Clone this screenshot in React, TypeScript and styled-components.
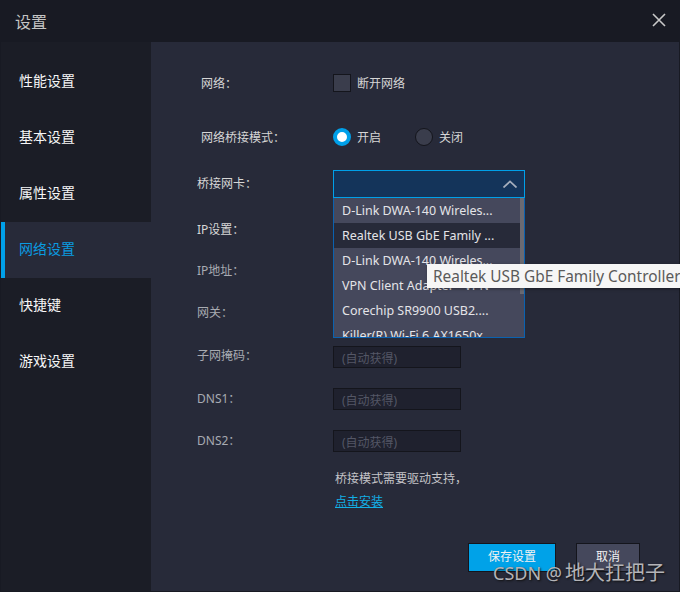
import { createGlobalStyle, styled } from "styled-components"

const GlobalStyle = createGlobalStyle`
    html, body {
        margin: 0;
        padding: 0;
        background: #181a23;
    }
    body {
        font-family: "Noto Sans", "Noto Sans CJK SC", sans-serif;
    }
`

const navItems = ["性能设置", "基本设置", "属性设置", "网络设置", "快捷键", "游戏设置"]
const adapters = [
    "D-Link DWA-140 Wireles...",
    "Realtek USB GbE Family ...",
    "D-Link DWA-140 Wireles...",
    "VPN Client Adapter - VPN",
    "Corechip SR9900 USB2....",
    "Killer(R) Wi-Fi 6 AX1650x",
]

export default function App() {
    return (
        <Window>
            <GlobalStyle />
            <TitleBar>
                <Title>设置</Title>
                <CloseIcon viewBox="0 0 14 14">
                    <path d="M1 1 L13 13 M13 1 L1 13" />
                </CloseIcon>
            </TitleBar>
            <Body>
                <Sidebar>
                    {navItems.map((item) => (
                        <NavItem key={item} $active={item === "网络设置"}>{item}</NavItem>
                    ))}
                </Sidebar>
                <Panel>
                    <Form>
                        <Row $top={30}>
                            <Label $indent={4}>网络：</Label>
                            <Checkbox />
                            <OptionText>断开网络</OptionText>
                        </Row>
                        <Row $top={32}>
                            <Label $indent={4}>网络桥接模式：</Label>
                            <RadioGroup>
                                <Radio $on />
                                <OptionText>开启</OptionText>
                            </RadioGroup>
                            <RadioGroup>
                                <Radio />
                                <OptionText>关闭</OptionText>
                            </RadioGroup>
                        </Row>
                        <Row $top={22} $height={28}>
                            <Label $lift={2}>桥接网卡：</Label>
                            <Select>
                                <SelectHead>
                                    <Chevron viewBox="0 0 14 8">
                                        <path d="M0.5 7.5 L7 1.5 L13.5 7.5" />
                                    </Chevron>
                                </SelectHead>
                                <SelectList>
                                    <Options>
                                        {adapters.map((name, i) => (
                                            <Option key={i} $hover={i === 1}>{name}</Option>
                                        ))}
                                    </Options>
                                    <ScrollTrack>
                                        <ScrollThumb />
                                    </ScrollTrack>
                                </SelectList>
                            </Select>
                        </Row>
                        <Row $top={20}>
                            <Label>IP设置：</Label>
                        </Row>
                        <Row $top={22}>
                            <Label $dim $lift={6}>IP地址：</Label>
                            <Field>(自动获得)</Field>
                        </Row>
                        <Row $top={20}>
                            <Label $dim $lift={6}>网关：</Label>
                            <Field>(自动获得)</Field>
                        </Row>
                        <Row $top={20}>
                            <Label $dim $lift={4}>子网掩码：</Label>
                            <Field>(自动获得)</Field>
                        </Row>
                        <Row $top={20}>
                            <Label $dim $lift={2}>DNS1：</Label>
                            <Field>(自动获得)</Field>
                        </Row>
                        <Row $top={20}>
                            <Label $dim $lift={2}>DNS2：</Label>
                            <Field>(自动获得)</Field>
                        </Row>
                        <Hint>桥接模式需要驱动支持，</Hint>
                        <InstallLink>点击安装</InstallLink>
                    </Form>
                    <Actions>
                        <SaveButton>保存设置</SaveButton>
                        <CancelButton>取消</CancelButton>
                    </Actions>
                </Panel>
            </Body>
            <Tooltip>Realtek USB GbE Family Controller</Tooltip>
            <Watermark>CSDN @<WatermarkName>地大扛把子</WatermarkName></Watermark>
        </Window>
    )
}

const Window = styled.div`
    position: relative;
    width: 680px;
    height: 592px;
    overflow: hidden;
    display: flex;
    flex-direction: column;
    background: #181a23;
`

const TitleBar = styled.header`
    height: 42px;
    flex: none;
    display: flex;
    align-items: center;
    justify-content: space-between;
    padding: 0 14px 0 15px;
    background: #181a23;
`

const Title = styled.h1`
    margin: 0;
    font-size: 16px;
    font-weight: 400;
    color: #c4c4c4;
`

const CloseIcon = styled.svg`
    width: 14px;
    height: 14px;
    margin-bottom: 2px;
    fill: none;
    stroke: #c8c8c8;
    stroke-width: 1.6;
`

const Body = styled.div`
    flex: 1;
    display: flex;
    min-height: 0;
    margin: 0 1px 1px 1px;
`

const Sidebar = styled.nav`
    width: 150px;
    flex: none;
    padding-top: 12px;
    background: #1b1d26;
`

const NavItem = styled.div<{ $active?: boolean }>`
    box-sizing: border-box;
    height: 56px;
    display: flex;
    align-items: center;
    padding: 0 0 4px ${({ $active }) => ($active ? "14px" : "18px")};
    font-size: 14px;
    color: ${({ $active }) => ($active ? "#0a9be0" : "#f6f6f6")};
    background: ${({ $active }) => ($active ? "#272a39" : "transparent")};
    border-left: ${({ $active }) => ($active ? "4px solid #00a0e9" : "none")};
`

const Panel = styled.main`
    flex: 1;
    display: flex;
    flex-direction: column;
    justify-content: space-between;
    padding: 0 39px 19px 46px;
    background: #272a39;
`

const Form = styled.div`
    display: flex;
    flex-direction: column;
`

const Row = styled.div<{ $top: number; $height?: number }>`
    display: flex;
    align-items: center;
    height: ${({ $height }) => $height ?? 22}px;
    margin-top: ${({ $top }) => $top}px;
`

const Label = styled.label<{ $indent?: number; $dim?: boolean; $lift?: number }>`
    width: ${({ $indent }) => 136 - ($indent ?? 0)}px;
    flex: none;
    margin-left: ${({ $indent }) => $indent ?? 0}px;
    margin-bottom: ${({ $lift }) => $lift ?? 0}px;
    font-size: 12px;
    color: ${({ $dim }) => ($dim ? "#a8abb2" : "#d6d6d6")};
`

const OptionText = styled.span`
    font-size: 12px;
    color: #d6d6d6;
`

const Checkbox = styled.span`
    box-sizing: border-box;
    width: 18px;
    height: 18px;
    margin-right: 6px;
    background: #3a3d4c;
    border: 1px solid #14151c;
`

const RadioGroup = styled.div`
    display: flex;
    align-items: center;
    width: 82px;
`

const Radio = styled.span<{ $on?: boolean }>`
    box-sizing: border-box;
    width: 18px;
    height: 18px;
    margin-right: 6px;
    border-radius: 50%;
    border: ${({ $on }) => ($on ? "4px solid #00a0e9" : "1px solid #14151c")};
    background: ${({ $on }) => ($on ? "#fff" : "#3a3d4c")};
`

const Select = styled.div`
    position: relative;
    width: 192px;
    height: 28px;
`

const SelectHead = styled.div`
    box-sizing: border-box;
    height: 28px;
    display: flex;
    align-items: center;
    justify-content: flex-end;
    padding-right: 7px;
    background: #14345a;
    border: 1px solid #00a0e9;
`

const Chevron = styled.svg`
    width: 14px;
    height: 8px;
    fill: none;
    stroke: #a6aebc;
    stroke-width: 1.7;
`

const SelectList = styled.div`
    position: absolute;
    z-index: 2;
    top: 28px;
    left: 0;
    box-sizing: border-box;
    width: 192px;
    height: 140px;
    display: flex;
    overflow: hidden;
    background: #45485c;
    border: 1px solid #0a62b0;
    border-top: none;
`

const Options = styled.div`
    flex: 1;
    min-width: 0;
`

const Option = styled.div<{ $hover?: boolean }>`
    height: 25px;
    line-height: 25px;
    padding-left: 8px;
    font-size: 12.5px;
    white-space: nowrap;
    color: #e4e4e8;
    background: ${({ $hover }) => ($hover ? "#272a39" : "#45485c")};
`

const ScrollTrack = styled.div`
    width: 4px;
    flex: none;
`

const ScrollThumb = styled.div`
    height: 96px;
    background: #6a6a72;
`

const Field = styled.div`
    box-sizing: border-box;
    width: 128px;
    height: 22px;
    line-height: 23px;
    padding-left: 8px;
    font-size: 12px;
    color: #545766;
    background: #1f212e;
    border: 1px solid #14151c;
`

const Hint = styled.p`
    margin: 19px 0 0 138px;
    font-size: 12px;
    line-height: 16px;
    color: #c4c4c8;
`

const InstallLink = styled.a`
    margin: 7px 0 0 138px;
    font-size: 12px;
    line-height: 16px;
    color: #12b0e6;
    text-decoration: underline;
`

const Actions = styled.div`
    display: flex;
    justify-content: flex-end;
    gap: 20px;
`

const SaveButton = styled.button`
    box-sizing: border-box;
    width: 88px;
    height: 29px;
    padding: 0 0 3px;
    font-family: inherit;
    font-size: 12px;
    color: #f2f2f2;
    background: #00a2e8;
    border: 1px solid #14151c;
`

const CancelButton = styled(SaveButton)`
    width: 64px;
    background: #45485c;
`

const Tooltip = styled.div`
    position: absolute;
    z-index: 3;
    top: 264px;
    left: 427px;
    box-sizing: border-box;
    width: 270px;
    height: 24px;
    line-height: 26px;
    padding-left: 6px;
    font-size: 15.4px;
    white-space: nowrap;
    color: #5a5a5a;
    background: #f6f6f6;
    box-shadow: 1px 1px 3px rgba(0, 0, 0, 0.4);
`

const Watermark = styled.div`
    position: absolute;
    z-index: 4;
    top: 559px;
    left: 493px;
    font-size: 18px;
    line-height: 28px;
    white-space: nowrap;
    color: #b4b4b8;
    text-shadow: 1px 1px 2px #111;
`

const WatermarkName = styled.span`
    margin-left: 3px;
    font-size: 20px;
`
